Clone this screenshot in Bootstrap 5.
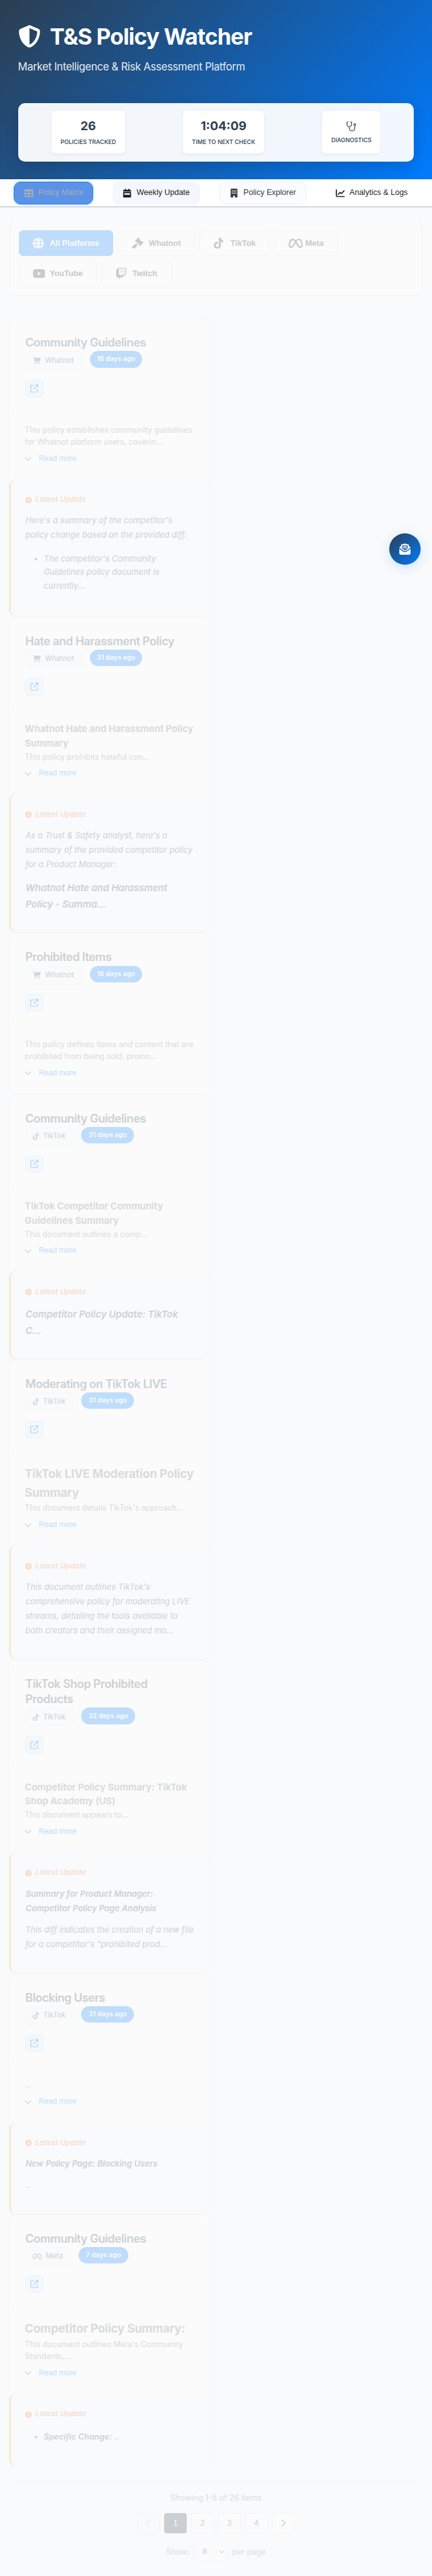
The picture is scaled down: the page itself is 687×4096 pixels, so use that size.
<!DOCTYPE html>
<html lang="en">
<head>
<meta charset="utf-8">
<meta name="viewport" content="width=device-width, initial-scale=1">
<title>T&amp;S Policy Watcher</title>
<link href="https://cdn.jsdelivr.net/npm/bootstrap@5.3.0/dist/css/bootstrap.min.css" rel="stylesheet">
<style>
html{font-size:8.9453px}
body{font-family:Inter,"Liberation Sans",sans-serif;font-size:1.6rem;background:#f8fafc;color:#2c3e50;position:relative;overflow-x:hidden}
svg{fill:currentColor;display:block;flex:none}
h1,h2,h3,h4,p,ul{margin:0}
button,select,.arial{font-family:"Liberation Sans",Arial,sans-serif}
.hero{height:31.9rem;padding:4.2rem 3.2rem 0;background:linear-gradient(135deg,#2c3e50 0%,#007bff 100%);color:#fff}
.hero h1{font-size:3.96rem;font-weight:700;line-height:4.8rem;letter-spacing:-.1rem}
.hero h1 svg{width:4rem;height:4rem;margin-right:1.65rem;margin-top:-.2rem}
.hero-sub{font-size:1.87rem;line-height:3rem;margin-top:1.4rem;opacity:.9;font-weight:400;letter-spacing:-.035rem}
.stats{margin-top:4.9rem;height:10.4rem;padding:0 .8rem;border-radius:1.2rem;background:rgba(255,255,255,.95);box-shadow:0 .8rem 2.4rem rgba(0,0,0,.14)}
.stat{height:7.6rem;padding:1.45rem 1.6rem 0;border-radius:.8rem;background:#fff;box-shadow:0 .2rem .6rem rgba(0,0,0,.06);text-align:center;color:#2c3e50}
.stat b{display:block;font-size:2.16rem;line-height:2.6rem;font-weight:700}
.stat span{display:block;font-size:1.04rem;line-height:1.4rem;margin-top:.85rem;font-weight:500;white-space:nowrap}
.stat svg{width:2rem;height:2rem;margin:.3rem auto;color:#4f6070}
.tabs{height:4.8rem;padding:0 .8rem;background:#fff;box-shadow:0 1px 2px rgba(0,0,0,.28)}
.tab{height:4rem;padding:0 1.7rem;border:1px solid transparent;border-radius:1.2rem;background:none;font-size:1.4rem;color:#1f1f1f;white-space:nowrap}
.tab svg{width:1.6rem;height:1.6rem;margin-right:.9rem}
.tab.on{background:#5c93e6;border-color:#1a80f5;color:#adadad;box-shadow:0 0 0 .2rem #d3e8fb}
.tab.t2{background:#f4f7fe;border-color:#edf3fd}
.tab.t3{background:#fafcff;border-color:#e5f0fd;color:#3a3a3a}
.filters{margin:2.55rem 1.7rem 0;height:13.3rem;padding:1.55rem 1.5rem;border:1px solid #f3f4f4;border-radius:1.2rem;background:#fbfbfb;box-shadow:0 0 .3rem rgba(0,0,0,.02);gap:.8rem;align-content:flex-start}
.fbtn{height:4.6rem;padding:0 2.4rem;border:1px solid #f4f4f4;border-radius:.8rem;background:#fbfbfb;color:#c8c9ca;font-size:1.43rem;font-weight:700;white-space:nowrap}
.fbtn i{display:block;width:2rem;margin-right:1rem}
.fbtn svg{height:2rem}
.fbtn.on{background:#bfdcfb;border-color:#bfdcfb;color:#fbfcfe}
.cards{margin:4.15rem 0 0 1.7rem;width:35.4rem;display:flex;flex-direction:column;gap:.22rem}
.pcard{border-radius:1.2rem;background:#fbfbfb;box-shadow:0 0 .6rem rgba(30,80,120,.03)}
.phead{padding:2.8rem 2.8rem 1.98rem;border-bottom:1px solid #f7f9fa;margin-bottom:-1px}
.phead h2{font-size:2.06rem;line-height:2.704rem;font-weight:600;color:#cbd1d5;letter-spacing:-.055rem}
.ptags{margin-top:.22rem;height:3.35rem}
.ptag{height:3.35rem;border:1px solid #f4f6f8;border-radius:.8rem;background:#f9fafc;color:#d5d6d7;font-size:1.28rem;font-weight:500;padding:0 1.22rem}
.ptag svg{height:1.28rem;margin-right:.7rem}
.age{height:2.95rem;margin-left:1.45rem;padding:0 1.28rem;border-radius:1.5rem;background:#bfdcfb;color:#fbfcfe;font-size:1.2rem;font-weight:600;white-space:nowrap}
.ext{width:3.2rem;height:3.2rem;margin-top:1.65rem;border:1px solid #e9f3fd;border-radius:.6rem;background:#f4f8fb;color:#bfdcfb}
.ext svg{width:1.5rem;height:1.5rem}
.pbody{padding:2.72rem 2.7rem 2.4rem;color:#dadbdc}
.pbody h3{font-size:1.66rem;line-height:2.54rem;font-weight:700;white-space:nowrap;letter-spacing:-.004rem}
.pbody h3.big{font-size:2.08rem;line-height:3.3rem;letter-spacing:-.022rem}
.pbody p{font-size:1.4rem;line-height:2.15rem;white-space:nowrap;letter-spacing:-.003rem}
.more{margin-top:.73rem;font-size:1.35rem;line-height:2.4rem;color:#bfdcfb}
.more svg{width:1.2rem;height:1.2rem;margin-right:1.3rem}
.upd{border-left:.3rem solid #fbe3c0;border-radius:1.2rem;background:#f9fafc;box-shadow:inset 0 1px 0 #f7f9fb;padding:2.74rem 2.3rem 3.8rem 2.6rem;font-style:italic;color:#cfd0d2}
.lat{font-size:1.28rem;line-height:2rem;font-weight:600;letter-spacing:.023rem;color:#f6e0ce;margin-bottom:1.38rem}
.lat svg{width:1.2rem;height:1.2rem;margin-right:.6rem}
.upd p{font-size:1.44rem;line-height:2.58rem;white-space:nowrap;letter-spacing:.009rem}
.upd h3{font-size:1.68rem;line-height:2.88rem;font-weight:600;color:#cbd1d5;white-space:nowrap}
.upd h4{font-size:1.48rem;line-height:2.6rem;font-weight:600;color:#cbd1d5;white-space:nowrap}
.upd ul{font-size:1.44rem;line-height:2.44rem;padding-left:3.25rem;white-space:nowrap;letter-spacing:.009rem}
.foot{margin:2.5rem 1.7rem 0;border-top:1px solid #f5f7f9;color:#dcdddf;font-size:1.42rem}
.pg{width:4rem;height:3.65rem;border:1px solid #f3f4f5;border-radius:.4rem;background:#fbfbfb;color:#cbd1d5;font-size:1.44rem}
.pg.on{background:#cacfd3;border-color:#cacfd3;color:#fbfbfb}
.pg.off{background:#f9fafc;color:#eceeef}
.pg svg{width:1.3rem;height:1.3rem}
.sel{width:5.75rem;height:3.25rem;border:1px solid #f3f4f5;border-radius:.4rem;background:#fbfbfb;color:#cbd1d5;padding:0 .35rem 0 1.3rem}
.sel svg{width:1rem;height:1rem}
.fab{position:absolute;left:69.2rem;top:94.8rem;width:5.6rem;height:5.6rem;border-radius:50%;background:linear-gradient(135deg,#2c3e50,#007bff);color:#fff;box-shadow:0 .4rem 2rem rgba(0,123,255,.18)}
.fab svg{width:2rem;height:2rem}
.ln{fill:none;stroke:currentColor;stroke-linecap:round;stroke-linejoin:round}
</style>
</head>
<body>
<svg width="0" height="0" class="position-absolute" aria-hidden="true">
<symbol id="shield" viewBox="0 0 512 512"><path d="M256 0c4.6 0 9.2 1 13.4 2.9L457.7 82.8c22 9.3 38.4 31 38.3 57.2c-.5 99.2-41.3 280.7-213.6 363.2c-16.7 8-36.1 8-52.8 0C57.3 420.7 16.5 239.2 16 140c-.1-26.2 16.3-47.9 38.3-57.2L242.7 2.9C246.8 1 251.4 0 256 0zm0 66.8V444.8C394 378 431.1 230.1 432 141.4L256 66.8z"/></symbol>
<symbol id="steth" viewBox="0 0 576 512"><path class="ln" stroke-width="48" d="M104 28 60 40v118a116 116 0 0 0 232 0V40L248 28M176 280v68a140 140 0 0 0 280 0v-140"/><circle class="ln" cx="456" cy="168" r="46" stroke-width="44"/></symbol>
<symbol id="table" viewBox="0 0 512 512"><path fill-rule="evenodd" d="M64 32h384a64 64 0 0 1 64 64v320a64 64 0 0 1-64 64H64a64 64 0 0 1-64-64V96a64 64 0 0 1 64-64zm0 120v88h156v-88zm228 0v88h156v-88zM64 312v96h156v-96zm228 0v96h156v-96z"/></symbol>
<symbol id="cal" viewBox="0 0 512 512"><path fill-rule="evenodd" d="M160 0a32 32 0 0 1 32 32v32h128V32a32 32 0 0 1 64 0v32h48a48 48 0 0 1 48 48v48H32v-48a48 48 0 0 1 48-48h48V32a32 32 0 0 1 32-32zM32 192h448v272a48 48 0 0 1-48 48H80a48 48 0 0 1-48-48zm64 64v96h320v-96z"/></symbol>
<symbol id="bld" viewBox="0 0 512 512"><path fill-rule="evenodd" d="M112 0h288a48 48 0 0 1 48 48v416a48 48 0 0 1-48 48h-96v-80a48 48 0 0 0-96 0v80h-96a48 48 0 0 1-48-48V48a48 48 0 0 1 48-48zm16 96v64h64V96zm96 0v64h64V96zm96 0v64h64V96zM128 224v64h64v-64zm96 0v64h64v-64zm96 0v64h64v-64z"/></symbol>
<symbol id="chart" viewBox="0 0 512 512"><path class="ln" stroke-width="60" d="M32 64v340a44 44 0 0 0 44 44h404M128 330l112-118 80 74L470 120"/></symbol>
<symbol id="globe" viewBox="0 0 512 512"><path d="M352 256c0 22.2-1.2 43.6-3.3 64H163.3c-2.2-20.4-3.3-41.8-3.3-64s1.2-43.6 3.3-64H348.7c2.2 20.4 3.3 41.8 3.3 64zm28.8-64H503.9c5.3 20.5 8.1 41.9 8.1 64s-2.8 43.5-8.1 64H380.8c2.1-20.6 3.2-42 3.2-64s-1.1-43.4-3.2-64zm112.6-32H376.7c-10-63.9-29.8-117.4-55.3-151.6c78.3 20.7 142 77.5 171.9 151.6zm-149.1 0H167.7c6.1-36.4 15.5-68.6 27-94.7c10.5-23.6 22.2-40.7 33.5-51.5C239.4 3.2 248.7 0 256 0s16.6 3.2 27.8 13.8c11.3 10.8 23 27.9 33.5 51.5c11.6 26 20.9 58.2 27 94.7zm-209 0H18.6C48.6 85.9 112.2 29.1 190.6 8.4C165.1 42.6 145.3 96.1 135.3 160zM8.1 192H131.2c-2.1 20.6-3.2 42-3.2 64s1.1 43.4 3.2 64H8.1C2.8 299.5 0 278.1 0 256s2.8-43.5 8.1-64zM194.7 446.6c-11.6-26-20.9-58.2-27-94.6H344.3c-6.1 36.4-15.5 68.6-27 94.6c-10.5 23.6-22.2 40.7-33.5 51.5C272.6 508.8 263.3 512 256 512s-16.6-3.2-27.8-13.8c-11.3-10.8-23-27.9-33.5-51.5zM135.3 352c10 63.9 29.8 117.4 55.3 151.6C112.2 482.9 48.6 426.1 18.6 352H135.3zm358.1 0c-30 74.1-93.6 130.9-171.9 151.6c25.5-34.2 45.2-87.7 55.3-151.6H493.4z"/></symbol>
<symbol id="gavel" viewBox="0 0 512 512"><path d="M318.6 9.4c-12.5-12.5-32.8-12.5-45.3 0l-120 120c-12.5 12.5-12.5 32.8 0 45.3l16 16c12.5 12.5 32.8 12.5 45.3 0l4-4L325.4 293.4l-4 4c-12.5 12.5-12.5 32.8 0 45.3l16 16c12.5 12.5 32.8 12.5 45.3 0l120-120c12.5-12.5 12.5-32.8 0-45.3l-16-16c-12.5-12.5-32.8-12.5-45.3 0l-4 4L330.6 74.6l4-4c12.5-12.5 12.5-32.8 0-45.3l-16-16zm-152 288c-12.5-12.5-32.8-12.5-45.3 0l-112 112c-12.5 12.5-12.5 32.8 0 45.3l48 48c12.5 12.5 32.8 12.5 45.3 0l112-112c12.5-12.5 12.5-32.8 0-45.3l-1.4-1.4L272 285.3 226.7 240 168 298.7l-1.4-1.4z"/></symbol>
<symbol id="tiktok" viewBox="0 0 448 512"><path d="M448 209.9a210.1 210.1 0 0 1-122.8-39.3V349.4A162.6 162.6 0 1 1 185 188.3V278.2a74.6 74.6 0 1 0 52.2 71.2V0l88 0a121.2 121.2 0 0 0 1.9 22.2A122.2 122.2 0 0 0 381 102.4a121.4 121.4 0 0 0 67 20.1z"/></symbol>
<symbol id="meta" viewBox="0 0 640 512"><path d="M640 317.9C640 409.2 600.6 466.4 529.7 466.4C467.1 466.4 433.9 431.8 372.8 329.8L341.4 277.2C333.1 264.7 326.9 253 320.2 242.2C300.1 276 273.1 325.2 273.1 325.2C206.1 441.8 168.5 466.4 116.2 466.4C43.4 466.4 0 409.1 0 320.5C0 177.5 79.8 42.4 183.9 42.4C234.1 42.4 277.7 67.1 328.7 131.9C365.8 81.8 406.8 42.4 459.3 42.4C558.4 42.4 640 168.1 640 317.9H640zM287.4 192.2C244.5 130.1 216.5 111.7 183 111.7C121.1 111.7 69.2 217.8 69.2 321.7C69.2 370.2 87.7 397.4 118.8 397.4C149 397.4 167.8 378.4 222 293.6C222 293.6 246.7 254.5 287.4 192.2V192.2zM531.2 397.4C563.4 397.4 578.1 369.9 578.1 322.5C578.1 198.3 523.8 97.1 454.9 97.1C421.7 97.1 393.8 123 360 175.1C369.4 188.9 379.1 204.1 389.3 220.5L426.8 282.9C485.5 377 500.3 397.4 531.2 397.4L531.2 397.4z"/></symbol>
<symbol id="yt" viewBox="0 0 576 512"><path fill-rule="evenodd" d="M96 64Q288 52 480 64Q550 70 556 140Q566 256 556 372Q550 442 480 448Q288 460 96 448Q26 442 20 372Q10 256 20 140Q26 70 96 64zM232 174v164l144-82z"/></symbol>
<symbol id="twitch" viewBox="0 0 512 512"><path d="M391.17,103.47H352.54v109.7h38.63ZM285,103H246.37V212.75H285ZM120.83,0,24.31,91.42V420.58H140.14V512l96.53-91.42h77.25L487.69,256V0ZM449.07,237.75l-77.22,73.12H294.61l-67.6,64v-64H140.14V36.58H449.07Z"/></symbol>
<symbol id="cart" viewBox="0 0 576 512"><path d="M0 24C0 10.7 10.7 0 24 0H69.5c22 0 41.5 12.8 50.6 32h411c26.3 0 45.5 25 38.6 50.4l-41 152.3c-8.5 31.4-37 53.3-69.5 53.3H170.7l5.4 28.5c2.2 11.3 12.1 19.5 23.6 19.5H488c13.3 0 24 10.7 24 24s-10.7 24-24 24H199.7c-34.6 0-64.3-24.6-70.7-58.5L77.4 54.5c-.7-3.8-4-6.5-7.9-6.5H24C10.7 48 0 37.3 0 24zM128 464a48 48 0 1 1 96 0 48 48 0 1 1 -96 0zm336-48a48 48 0 1 1 0 96 48 48 0 1 1 0-96z"/></symbol>
<symbol id="ext" viewBox="0 0 512 512"><path class="ln" stroke-width="62" d="M200 72H80a44 44 0 0 0-44 44v316a44 44 0 0 0 44 44h316a44 44 0 0 0 44-44V312M214 298 420 92"/><path d="M330 0h158a24 24 0 0 1 24 24v158c0 20-26 30-40 16L314 40c-14-14-4-40 16-40z"/></symbol>
<symbol id="clock" viewBox="0 0 512 512"><path fill-rule="evenodd" d="M256 0a256 256 0 1 1 0 512A256 256 0 1 1 256 0zM232 120V256c0 8 4 15.5 10.7 20l96 64c11 7.4 25.9 4.4 33.3-6.7s4.4-25.9-6.7-33.3L280 243.2V120c0-13.3-10.7-24-24-24s-24 10.7-24 24z"/></symbol>
<symbol id="down" viewBox="0 0 16 16"><path class="ln" stroke-width="2" d="M1.2 4.8 8 11.6l6.8-6.8"/></symbol>
<symbol id="left" viewBox="0 0 16 16"><path class="ln" stroke-width="2.2" d="M11 1.5 4.5 8l6.500 6.500"/></symbol>
<symbol id="right" viewBox="0 0 16 16"><path class="ln" stroke-width="2.2" d="M5 1.500 11.500 8 5 14.500"/></symbol>
<symbol id="mail" viewBox="0 0 512 512"><path d="M215 18a64 64 0 0 1 82 0l24 18h63a48 48 0 0 1 48 48v34l56 42a56 56 0 0 1 24 34L330 330a122 122 0 0 1-148 0L0 194a56 56 0 0 1 24-34l56-42V84a48 48 0 0 1 48-48h63zM128 96v134l86 64a70 70 0 0 0 84 0l86-64V96z" fill-rule="evenodd"/><path d="M160 132h192v34H160zM160 196h192v34H160zM0 242l164 122a154 154 0 0 0 184 0l164-122v206a64 64 0 0 1-64 64H64a64 64 0 0 1-64-64z"/></symbol>
</svg>

<header class="hero">
  <h1 class="d-flex align-items-center"><svg><use href="#shield"/></svg>T&amp;S Policy Watcher</h1>
  <p class="hero-sub">Market Intelligence &amp; Risk Assessment Platform</p>
  <div class="stats d-flex justify-content-around align-items-center">
    <div class="stat"><b>26</b><span>POLICIES TRACKED</span></div>
    <div class="stat"><b>1:04:09</b><span>TIME TO NEXT CHECK</span></div>
    <div class="stat"><svg><use href="#steth"/></svg><span>DIAGNOSTICS</span></div>
  </div>
</header>
<nav class="tabs d-flex justify-content-around align-items-center">
  <button class="tab on d-flex align-items-center"><svg><use href="#table"/></svg>Policy Matrix</button>
  <button class="tab t2 d-flex align-items-center"><svg><use href="#cal"/></svg>Weekly Update</button>
  <button class="tab t3 d-flex align-items-center"><svg><use href="#bld"/></svg>Policy Explorer</button>
  <button class="tab d-flex align-items-center"><svg><use href="#chart"/></svg>Analytics &amp; Logs</button>
</nav>
<main>
<section class="filters d-flex flex-wrap">
  <button class="fbtn on d-flex align-items-center"><i><svg viewBox="0 0 512 512"><use href="#globe"/></svg></i>All Platforms</button>
  <button class="fbtn d-flex align-items-center"><i><svg viewBox="0 0 512 512"><use href="#gavel"/></svg></i>Whatnot</button>
  <button class="fbtn d-flex align-items-center"><i><svg viewBox="0 0 448 512"><use href="#tiktok"/></svg></i>TikTok</button>
  <button class="fbtn d-flex align-items-center"><i><svg viewBox="0 0 640 512"><use href="#meta"/></svg></i>Meta</button>
  <button class="fbtn d-flex align-items-center"><i><svg viewBox="0 0 576 512"><use href="#yt"/></svg></i>YouTube</button>
  <button class="fbtn d-flex align-items-center"><i><svg viewBox="0 0 512 512"><use href="#twitch"/></svg></i>Twitch</button>
</section>
<section class="cards">
  <article class="pcard">
    <div class="phead"><h2>Community Guidelines</h2>
      <div class="ptags d-flex"><span class="ptag d-flex align-items-center"><svg viewBox="0 0 576 512"><use href="#cart"/></svg>Whatnot</span><span class="age d-flex align-items-center">18 days ago</span></div>
      <a class="ext d-flex align-items-center justify-content-center"><svg><use href="#ext"/></svg></a></div>
    <div class="pbody"><p>This policy establishes community guidelines<br>for Whatnot platform users, coverin...</p>
      <div class="more arial d-flex align-items-center"><svg><use href="#down"/></svg>Read more</div></div>
    <div class="upd"><div class="lat d-flex align-items-center"><svg><use href="#clock"/></svg>Latest Update</div>
      <p>Here's a summary of the competitor's<br>policy change based on the provided diff:</p>
      <ul style="margin-top:1.7rem;margin-bottom:.3rem"><li>The competitor's Community<br>Guidelines policy document is<br>currently...</li></ul></div>
  </article>
  <article class="pcard">
    <div class="phead"><h2>Hate and Harassment Policy</h2>
      <div class="ptags d-flex"><span class="ptag d-flex align-items-center"><svg viewBox="0 0 576 512"><use href="#cart"/></svg>Whatnot</span><span class="age d-flex align-items-center">31 days ago</span></div>
      <a class="ext d-flex align-items-center justify-content-center"><svg><use href="#ext"/></svg></a></div>
    <div class="pbody"><h3>Whatnot Hate and Harassment Policy<br>Summary</h3><p>This policy prohibits hateful con...</p>
      <div class="more arial d-flex align-items-center"><svg><use href="#down"/></svg>Read more</div></div>
    <div class="upd"><div class="lat d-flex align-items-center"><svg><use href="#clock"/></svg>Latest Update</div>
      <p>As a Trust &amp; Safety analyst, here's a<br>summary of the provided competitor policy<br>for a Product Manager:</p>
      <h3 style="margin-top:1.45rem;margin-bottom:-.27rem">Whatnot Hate and Harassment<br>Policy - Summa...</h3></div>
  </article>
  <article class="pcard">
    <div class="phead"><h2>Prohibited Items</h2>
      <div class="ptags d-flex"><span class="ptag d-flex align-items-center"><svg viewBox="0 0 576 512"><use href="#cart"/></svg>Whatnot</span><span class="age d-flex align-items-center">18 days ago</span></div>
      <a class="ext d-flex align-items-center justify-content-center"><svg><use href="#ext"/></svg></a></div>
    <div class="pbody"><p>This policy defines items and content that are<br>prohibited from being sold, promo...</p>
      <div class="more arial d-flex align-items-center"><svg><use href="#down"/></svg>Read more</div></div>
  </article>
  <article class="pcard">
    <div class="phead"><h2>Community Guidelines</h2>
      <div class="ptags d-flex"><span class="ptag d-flex align-items-center"><svg viewBox="0 0 448 512"><use href="#tiktok"/></svg>TikTok</span><span class="age d-flex align-items-center">31 days ago</span></div>
      <a class="ext d-flex align-items-center justify-content-center"><svg><use href="#ext"/></svg></a></div>
    <div class="pbody"><h3>TikTok Competitor Community<br>Guidelines Summary</h3><p>This document outlines a comp...</p>
      <div class="more arial d-flex align-items-center"><svg><use href="#down"/></svg>Read more</div></div>
    <div class="upd"><div class="lat d-flex align-items-center"><svg><use href="#clock"/></svg>Latest Update</div>
      <h3 style="margin-top:1.5rem;margin-bottom:-.2rem">Competitor Policy Update: TikTok<br>C...</h3></div>
  </article>
  <article class="pcard">
    <div class="phead"><h2>Moderating on TikTok LIVE</h2>
      <div class="ptags d-flex"><span class="ptag d-flex align-items-center"><svg viewBox="0 0 448 512"><use href="#tiktok"/></svg>TikTok</span><span class="age d-flex align-items-center">31 days ago</span></div>
      <a class="ext d-flex align-items-center justify-content-center"><svg><use href="#ext"/></svg></a></div>
    <div class="pbody"><h3 class="big">TikTok LIVE Moderation Policy<br>Summary</h3><p>This document details TikTok's approach...</p>
      <div class="more arial d-flex align-items-center"><svg><use href="#down"/></svg>Read more</div></div>
    <div class="upd"><div class="lat d-flex align-items-center"><svg><use href="#clock"/></svg>Latest Update</div>
      <p>This document outlines TikTok's<br>comprehensive policy for moderating LIVE<br>streams, detailing the tools available to<br>both creators and their assigned mo...</p></div>
  </article>
  <article class="pcard">
    <div class="phead"><h2>TikTok Shop Prohibited<br>Products</h2>
      <div class="ptags d-flex"><span class="ptag d-flex align-items-center"><svg viewBox="0 0 448 512"><use href="#tiktok"/></svg>TikTok</span><span class="age d-flex align-items-center">32 days ago</span></div>
      <a class="ext d-flex align-items-center justify-content-center"><svg><use href="#ext"/></svg></a></div>
    <div class="pbody"><h3>Competitor Policy Summary: TikTok<br>Shop Academy (US)</h3><p>This document appears to...</p>
      <div class="more arial d-flex align-items-center"><svg><use href="#down"/></svg>Read more</div></div>
    <div class="upd"><div class="lat d-flex align-items-center"><svg><use href="#clock"/></svg>Latest Update</div>
      <h4>Summary for Product Manager:<br>Competitor Policy Page Analysis</h4>
      <p style="margin-top:1.2rem">This diff indicates the creation of a new file<br>for a competitor's "prohibited prod...</p></div>
  </article>
  <article class="pcard">
    <div class="phead"><h2>Blocking Users</h2>
      <div class="ptags d-flex"><span class="ptag d-flex align-items-center"><svg viewBox="0 0 448 512"><use href="#tiktok"/></svg>TikTok</span><span class="age d-flex align-items-center">31 days ago</span></div>
      <a class="ext d-flex align-items-center justify-content-center"><svg><use href="#ext"/></svg></a></div>
    <div class="pbody"><p>...</p>
      <div class="more arial d-flex align-items-center"><svg><use href="#down"/></svg>Read more</div></div>
    <div class="upd"><div class="lat d-flex align-items-center"><svg><use href="#clock"/></svg>Latest Update</div>
      <h4>New Policy Page: Blocking Users</h4>
      <p style="margin-top:1.2rem">..</p></div>
  </article>
  <article class="pcard">
    <div class="phead"><h2>Community Guidelines</h2>
      <div class="ptags d-flex"><span class="ptag d-flex align-items-center"><svg viewBox="0 0 640 512"><use href="#meta"/></svg>Meta</span><span class="age d-flex align-items-center">7 days ago</span></div>
      <a class="ext d-flex align-items-center justify-content-center"><svg><use href="#ext"/></svg></a></div>
    <div class="pbody"><h3 class="big">Competitor Policy Summary:</h3><p>This document outlines Meta's Community<br>Standards,...</p>
      <div class="more arial d-flex align-items-center"><svg><use href="#down"/></svg>Read more</div></div>
    <div class="upd"><div class="lat d-flex align-items-center"><svg><use href="#clock"/></svg>Latest Update</div>
      <ul style="margin-top:1.75rem;margin-bottom:.3rem"><li><b style="font-weight:600;color:#cbd1d5">Specific Change:</b> ..</li></ul></div>
  </article>
</section>
<footer class="foot d-flex flex-column align-items-center">
  <div style="line-height:2.2rem;margin-top:1.8rem">Showing 1-8 of 26 items</div>
  <div class="d-flex" style="gap:.8rem;margin-top:1.6rem">
    <button class="pg off d-flex align-items-center justify-content-center"><svg><use href="#left"/></svg></button>
    <button class="pg on">1</button><button class="pg">2</button><button class="pg">3</button><button class="pg">4</button>
    <button class="pg d-flex align-items-center justify-content-center"><svg><use href="#right"/></svg></button>
  </div>
  <div class="d-flex align-items-center" style="gap:.9rem;margin-top:1.6rem"><span>Show:</span><span class="sel arial d-flex align-items-center justify-content-between">8<svg><use href="#down"/></svg></span><span>per page</span></div>
</footer>
</main>
<button class="fab border-0 p-0 d-flex align-items-center justify-content-center"><svg><use href="#mail"/></svg></button>
<script src="https://cdn.jsdelivr.net/npm/bootstrap@5.3.0/dist/js/bootstrap.bundle.min.js"></script>
</body>
</html>
